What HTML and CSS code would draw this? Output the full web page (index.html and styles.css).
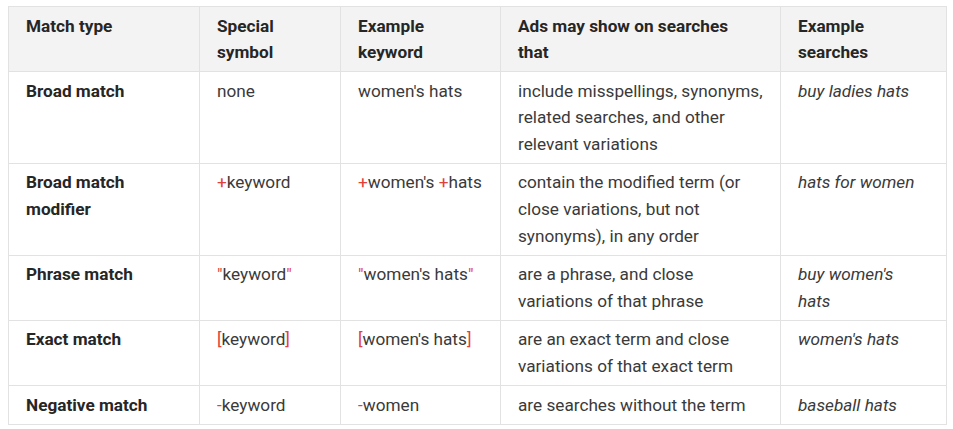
FILE: index.html
```html
<!DOCTYPE html>
<html>
<head>
<meta charset="utf-8">
<link rel="stylesheet" href="styles.css">
</head>
<body>
<table class="match-table">
  <colgroup>
    <col class="c1"><col class="c2"><col class="c3"><col class="c4"><col class="c5">
  </colgroup>
  <thead>
    <tr>
      <th>Match type</th>
      <th>Special symbol</th>
      <th>Example keyword</th>
      <th>Ads may show on searches<br>that</th>
      <th>Example searches</th>
    </tr>
  </thead>
  <tbody>
    <tr>
      <td class="type">Broad match</td>
      <td>none</td>
      <td>women's hats</td>
      <td>include misspellings, synonyms, related searches, and other relevant variations</td>
      <td class="ex">buy ladies hats</td>
    </tr>
    <tr>
      <td class="type">Broad match modifier</td>
      <td><span class="sym">+</span>keyword</td>
      <td><span class="sym">+</span>women's <span class="sym">+</span>hats</td>
      <td>contain the modified term (or close variations, but not synonyms), in any order</td>
      <td class="ex">hats for women</td>
    </tr>
    <tr>
      <td class="type">Phrase match</td>
      <td><span class="sym">"</span>keyword<span class="sym">"</span></td>
      <td><span class="sym">"</span>women's hats<span class="sym">"</span></td>
      <td>are a phrase, and close variations of that phrase</td>
      <td class="ex">buy women's<br>hats</td>
    </tr>
    <tr>
      <td class="type">Exact match</td>
      <td><span class="sym">[</span>keyword<span class="sym">]</span></td>
      <td><span class="sym">[</span>women's hats<span class="sym">]</span></td>
      <td>are an exact term and close variations of that exact term</td>
      <td class="ex">women's hats</td>
    </tr>
    <tr>
      <td class="type">Negative match</td>
      <td><span class="sym">-</span>keyword</td>
      <td><span class="sym">-</span>women</td>
      <td>are searches without the term</td>
      <td class="ex">baseball hats</td>
    </tr>
  </tbody>
</table>
</body>
</html>
```
FILE: styles.css
```css
html, body {
  margin: 0;
  padding: 0;
  background: #ffffff;
}
body {
  padding: 6px 0 0 8px;
  font-family: Roboto, "Liberation Sans", sans-serif;
  font-size: 17.2px;
  line-height: 26.6px;
  color: #3a3a3a;
}
.match-table {
  border-collapse: collapse;
  table-layout: fixed;
  width: 938px;
}
.c1 { width: 191px; }
.c2 { width: 141px; }
.c3 { width: 160px; }
.c4 { width: 280px; }
.c5 { width: 166px; }
.match-table th,
.match-table td {
  border: 1.5px solid #e2e2e2;
  padding: 5.5px 16px 5.5px 17px;
  text-align: left;
  vertical-align: top;
}
.match-table th {
  background: #f3f3f3;
  font-weight: 700;
  color: #262626;
}
.match-table td.type {
  font-weight: 700;
  color: #262626;
}
.match-table td.ex {
  font-style: italic;
}
.sym {
  color: #e2403a;
}
```
